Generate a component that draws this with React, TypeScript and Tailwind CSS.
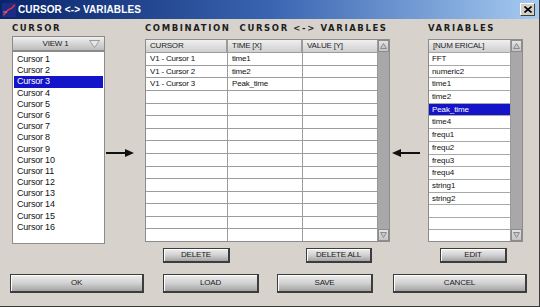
import React from "react";

const cursors = Array.from({ length: 16 }, (_, i) => `Cursor ${i + 1}`);
const combos: [string, string, string][] = [
  ["V1 - Cursor 1", "time1", ""],
  ["V1 - Cursor 2", "time2", ""],
  ["V1 - Cursor 3", "Peak_time", ""],
];
const vars = ["FFT", "numeric2", "time1", "time2", "Peak_time", "time4", "frequ1", "frequ2", "frequ3", "frequ4", "string1", "string2"];

function Label({ children }: { children: React.ReactNode }) {
  return (
    <div className="font-['DejaVu_Sans',sans-serif] font-bold text-[8.5px] leading-[10px] tracking-[1.6px] text-[#1e1e1e] whitespace-pre">
      {children}
    </div>
  );
}

function Tri({ down }: { down?: boolean }) {
  return (
    <svg width="7" height="6" viewBox="0 0 7 6">
      <path d={down ? "M0.5 0.5 L6.5 0.5 L3.5 5.5 Z" : "M0.5 5.5 L6.5 5.5 L3.5 0.5 Z"} fill="#c8c8c8" stroke="#8a8a8a" strokeWidth="1" />
    </svg>
  );
}

function ScrollBar() {
  return (
    <div className="w-[12px] h-full bg-[#a9a7a9] flex flex-col justify-between border-l border-[#9a9a9a]">
      <div className="h-[12px] bg-linear-to-b from-[#e4e4e4] to-[#c4c4c4] border border-[#8c8c8c] flex items-center justify-center">
        <Tri />
      </div>
      <div className="h-[12px] bg-linear-to-b from-[#e4e4e4] to-[#c4c4c4] border border-[#8c8c8c] flex items-center justify-center">
        <Tri down />
      </div>
    </div>
  );
}

function HeadCell({ children, w, last }: { children: React.ReactNode; w: string; last?: boolean }) {
  return (
    <div
      className={`${w} h-[12px] shrink-0 bg-linear-to-b from-[#f0f0f0] to-[#cfcfcf] pl-[4px] text-[8px] leading-[12px] tracking-[-0.2px] text-[#1e1e1e] ${
        last ? "" : "border-r-2 border-r-[#9c9c9c]"
      }`}
    >
      {children}
    </div>
  );
}

function Btn({ label, w, h, ml }: { label: string; w: string; h: string; ml: string }) {
  return (
    <div
      className={`${w} ${h} ${ml} shrink-0 border border-[#3c3c3c] border-r-2 border-b-2 bg-linear-to-b from-[#eeeeee] via-[#d2d2d2] to-[#a4a4a4] shadow-[inset_1px_1px_0_#ffffff] flex items-center justify-center text-[8px] tracking-[-0.2px] text-[#1a1a1a]`}
    >
      {label}
    </div>
  );
}

function ArrowRight() {
  return (
    <svg width="28" height="8" viewBox="0 0 28 8">
      <rect x="0" y="3" width="21" height="2" fill="#111" />
      <path d="M19 0 L28 4 L19 8 Z" fill="#111" />
    </svg>
  );
}
function ArrowLeft() {
  return (
    <svg width="28" height="8" viewBox="0 0 28 8">
      <rect x="7" y="3" width="21" height="2" fill="#111" />
      <path d="M9 0 L0 4 L9 8 Z" fill="#111" />
    </svg>
  );
}

export default function App() {
  const rowH = "h-[12.7px]";
  return (
    <div className="w-[540px] h-[307px] overflow-hidden bg-[#d7d3cc] border-r border-b border-[#3a3a3a] flex flex-col font-['Liberation_Sans',Arial,sans-serif]">
      {/* Title bar */}
      <div className="h-[19px] shrink-0 bg-linear-to-r from-[#0a246a] via-[#3a64b0] to-[#a6caf0] flex items-center pl-[2px] pr-[4px]">
        <svg width="14" height="14" viewBox="0 0 14 14" className="shrink-0">
          <rect width="14" height="14" fill="#1b2b86" />
          <path d="M1 12 C4 11 5 6 8 6 C10 6 11 3 13 2" stroke="#e0303a" strokeWidth="1.6" fill="none" />
          <path d="M1 9 L5 9" stroke="#8aa0e0" strokeWidth="1" />
        </svg>
        <div className="ml-[2px] text-white font-bold text-[10px] tracking-[0.1px]">CURSOR &lt;-&gt; VARIABLES</div>
        <div className="ml-auto w-[15px] h-[13px] bg-[#d4d0c8] border border-t-white border-l-white border-r-[#404040] border-b-[#404040] flex items-center justify-center">
          <svg width="8" height="7" viewBox="0 0 8 7">
            <path d="M0.5 0.5 L7.5 6.5 M7.5 0.5 L0.5 6.5" stroke="#000" strokeWidth="1.6" />
          </svg>
        </div>
      </div>

      {/* Columns */}
      <div className="flex items-start">
        {/* Left column */}
        <div className="ml-[12px] w-[93px] shrink-0 flex flex-col">
          <div className="h-[17px] pt-[4px]">
            <Label>CURSOR</Label>
          </div>
          <div className="h-[15px] bg-linear-to-b from-[#f0f0f0] to-[#bdbdbd] border border-[#8a8a8a] flex items-center relative">
            <div className="flex-1 text-center text-[8px] tracking-[-0.2px] text-[#1a1a1a] pr-[6px]">VIEW 1</div>
            <div className="absolute right-[4px] top-[3px]">
              <svg width="11" height="8" viewBox="0 0 11 8">
                <path d="M0.5 0.5 L10.5 0.5 L5.5 7.5 Z" fill="#e8e8e8" stroke="#9a9a9a" />
              </svg>
            </div>
          </div>
          <div className="h-[193px] bg-white border border-[#8c8c8c] pt-[2px] px-[1px]">
            {cursors.map((c, i) => (
              <div
                key={c}
                className={`h-[11.2px] leading-[11.2px] pl-[3px] text-[9px] tracking-[-0.2px] ${
                  i === 2 ? "bg-[#1414c8] text-white" : "text-[#111]"
                }`}
              >
                {c}
              </div>
            ))}
          </div>
        </div>

        {/* Arrow right */}
        <div className="w-[40px] shrink-0 pt-[130px] pl-[1px]">
          <ArrowRight />
        </div>

        {/* Middle column */}
        <div className="w-[245px] shrink-0 flex flex-col">
          <div className="h-[20px] pt-[4px]">
            <Label>{"COMBINATION  CURSOR <-> VARIABLES"}</Label>
          </div>
          <div className="h-[203px] flex border border-[#8c8c8c] bg-white">
            <div className="flex-1 flex flex-col">
              <div className="flex">
                <HeadCell w="w-[82px]">CURSOR</HeadCell>
                <HeadCell w="w-[75px]">TIME [X]</HeadCell>
                <HeadCell w="flex-1" last>VALUE [Y]</HeadCell>
              </div>
              {Array.from({ length: 15 }, (_, r) => {
                const d = combos[r] ?? ["", "", ""];
                return (
                  <div key={r} className={`flex ${rowH} border-t border-[#9c9c9c]`}>
                    <div className="w-[82px] shrink-0 border-r border-[#9c9c9c] pl-[4px] text-[8px] leading-[12px] tracking-[-0.2px] text-[#111]">{d[0]}</div>
                    <div className="w-[75px] shrink-0 border-r border-[#9c9c9c] pl-[4px] text-[8px] leading-[12px] tracking-[-0.2px] text-[#111]">{d[1]}</div>
                    <div className="flex-1 pl-[4px] text-[8px] leading-[12px] text-[#111]">{d[2]}</div>
                  </div>
                );
              })}
            </div>
            <ScrollBar />
          </div>
        </div>

        {/* Arrow left */}
        <div className="w-[38px] shrink-0 pt-[130px] pl-[2px]">
          <ArrowLeft />
        </div>

        {/* Right column */}
        <div className="w-[95px] shrink-0 flex flex-col">
          <div className="h-[20px] pt-[4px]">
            <Label>VARIABLES</Label>
          </div>
          <div className="h-[203px] flex border border-[#8c8c8c] bg-white">
            <div className="flex-1 flex flex-col">
              <HeadCell w="w-full" last>[NUM ERICAL]</HeadCell>
              {Array.from({ length: 15 }, (_, r) => {
                const v = vars[r] ?? "";
                return (
                  <div
                    key={r}
                    className={`${rowH} border-t border-[#a8a8a8] pl-[3px] text-[8px] leading-[12px] tracking-[-0.1px] ${
                      r === 4 ? "bg-[#1414c8] text-white" : "text-[#111]"
                    }`}
                  >
                    {v}
                  </div>
                );
              })}
            </div>
            <ScrollBar />
          </div>
        </div>
      </div>

      {/* Button row 1 */}
      <div className="flex mt-[4px]">
        <Btn label="DELETE" w="w-[67px]" h="h-[15px]" ml="ml-[163px]" />
        <Btn label="DELETE ALL" w="w-[66px]" h="h-[15px]" ml="ml-[76px]" />
        <Btn label="EDIT" w="w-[67px]" h="h-[15px]" ml="ml-[68px]" />
      </div>

      {/* Button row 2 */}
      <div className="flex mt-[11px]">
        <Btn label="OK" w="w-[134px]" h="h-[19px]" ml="ml-[10px]" />
        <Btn label="LOAD" w="w-[96px]" h="h-[19px]" ml="ml-[19px]" />
        <Btn label="SAVE" w="w-[96px]" h="h-[19px]" ml="ml-[18px]" />
        <Btn label="CANCEL" w="w-[134px]" h="h-[19px]" ml="ml-[20px]" />
      </div>
    </div>
  );
}
